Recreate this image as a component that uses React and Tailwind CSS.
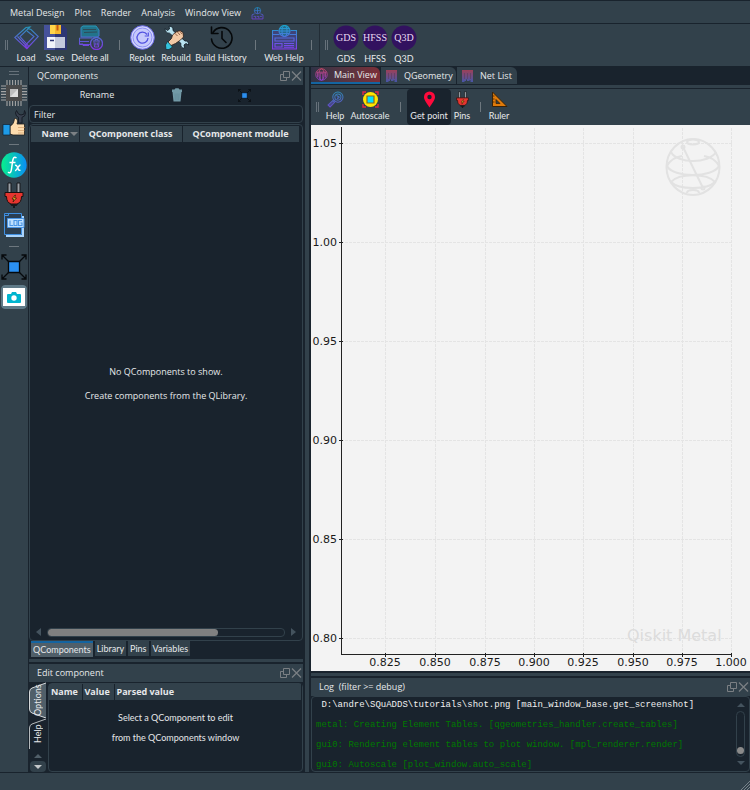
import React, { useId } from "react";

const FONT = "font-['Open_Sans','Noto_Sans',sans-serif]";
const NARROW = "font-['Lato','Open_Sans',sans-serif]";

/* ---------- icons ---------- */

function GradIcon({ size = 25, from = "#1fa0b8", to = "#8433e6", label, children, width = 1 }) {
  const id = useId();
  return (
    <svg width={size} height={size} viewBox="0 0 25 25" fill="none" stroke={`url(#${id})`} strokeWidth={width} aria-label={label}>
      <defs>
        <linearGradient id={id} gradientUnits="userSpaceOnUse" x1="0" y1="0" x2="0" y2="25">
          <stop offset="0" stopColor={from} />
          <stop offset="1" stopColor={to} />
        </linearGradient>
      </defs>
      {children}
    </svg>
  );
}

const LoadIcon = () => (
  <GradIcon width={1.1}>
    <path d="M12 2.500 16 2l-10 9.500L14.500 21 12.500 23.500.800 12.500 12 2.500M3.500 11.500 13 21.500" />
    <path d="M13.500 3.500 17 4.500 24.300 11.500 13 23.500 11 20.500 20 11.500 13 6" />
  </GradIcon>
);

const SaveIcon = () => (
  <svg width="25" height="25" viewBox="0 0 25 25">
    <path d="M1 0h19l4 4v21H1z" fill="#2d3674" />
    <path d="M1 0h11v25H1z" fill="#46529b" />
    <path d="M7 0h11v9H7z" fill="#f5b82e" />
    <path d="M7 0h5v9H7z" fill="#ffd54a" />
    <path d="M13.500 0h2v5.500h-2z" fill="#c65a14" />
    <path d="M4 12h18v11H4z" fill="#c3c9dc" />
    <path d="M4 12h8v11H4z" fill="#f1f3fa" />
    <path d="M7 15.500h4" stroke="#2d3674" strokeWidth="1.500" />
  </svg>
);

const DeleteAllIcon = () => (
  <GradIcon>
    <path d="M3 10V2.500L5 1h13l3 4v6l-2 1H3z" fill="#1d86a0" fillOpacity="0.750" />
    <path d="M5 4.500h13M6 7.500l13-.5" stroke="#32414b" strokeWidth="0.800" />
    <path d="M14 13H1.500M1.500 13v6.500H12M2 16.500h9M2 19h3v1.500h6" />
    <circle cx="18.500" cy="18.500" r="6" fill="#32414b" strokeWidth="1.300" />
    <path d="M15 16h7M17 16v-1.500h3V16M16 16.500l.5 5.500h4l.5-5.500M17.800 17.500v3M19.300 17.500v3" />
  </GradIcon>
);

const ReplotIcon = () => (
  <svg width="25" height="25" viewBox="0 0 25 25" fill="none">
    <circle cx="12.500" cy="12.500" r="11.800" fill="#d4d6fb" stroke="#6b6be8" strokeWidth="1" />
    <circle cx="12.500" cy="12.500" r="9.500" fill="#c6c9fb" stroke="#8b8df5" strokeWidth="1" />
    <path d="M17 9.500A5.500 5.500 0 1 0 18 13" stroke="#5252e0" strokeWidth="1.300" />
    <path d="M18.300 7.500v3.500h-3.600" stroke="#5252e0" strokeWidth="1.200" />
  </svg>
);

const RebuildIcon = () => (
  <svg width="25" height="25" viewBox="0 0 25 25" strokeLinejoin="round">
    <path d="M1 3.500 3.500 5.500 5.500 4 5 1.200C8 1 9.500 3 9 5.500l12 10.500c2.500-.5 4 1.500 3.500 4L22 18.500 20 20l.8 3.200c-3 .3-4.600-2-3.800-4.700L5.500 8.200C3 8.500 1 6.500 1 3.500z" fill="#b9e2f0" stroke="#16232c" strokeWidth="0.900" />
    <path d="M6 21 4 17l3.500-3.500L8.500 10l3.500-3 4-1.500 3 2 .5 4.500-3 3-5 3.500z" fill="#f3c9a5" stroke="#2a1d18" strokeWidth="0.800" />
    <path d="m10.500 8 3 3M13 6.500l3 3.500M15.500 6l2.500 3" stroke="#7b4a33" strokeWidth="0.800" />
    <path d="m3.500 16.500 5 5.500-3.500 2.500H2L1.500 20z" fill="#33c2dc" stroke="#16232c" strokeWidth="0.700" />
  </svg>
);

const HistoryIcon = () => (
  <svg width="25" height="25" viewBox="0 0 25 25" fill="none" stroke="#05080a" strokeWidth="1.600" strokeLinecap="round" strokeLinejoin="round">
    <path d="M4 7.500A10.300 10.300 0 1 1 2.500 14" />
    <path d="M2.500 2v6.500H9M13 6.500v7l4 4" />
  </svg>
);

const WebHelpIcon = ({ size = 25 }) => (
  <GradIcon size={size} from="#18a5c9" to="#8a36f0" width={1.1}>
    <path d="M6.500 5.500H.500v18.500h24V5.500h-6M.500 9.500h7M17.500 9.500h7" fill="#5a48d0" fillOpacity="0.350" />
    <circle cx="12.500" cy="6" r="5.500" fill="#246a8c" />
    <ellipse cx="12.500" cy="6" rx="2.500" ry="5.500" />
    <path d="M7 6h11M8 3.500h9M8 8.500h9M3 13h19v3H3zM3 18.500h7v3.500H3zM12 18.500h10M12 20.500h10M12 22.300h10" />
  </GradIcon>
);

const TinyWebIcon = () => (
  <GradIcon size={13} from="#1b8fc0" to="#7a36d8" width={1.600}>
    <circle cx="12.500" cy="7" r="6" />
    <path d="M6.500 7h12M12.500 1v12M7 13 2 15v8h21v-8l-5-2M5 18h4v4M11 18h4v4M17 18h4" />
  </GradIcon>
);

const BadgeIcon = ({ text }) => (
  <svg width="26" height="26" viewBox="0 0 26 26">
    <circle cx="13" cy="13" r="12.500" fill="#32125f" />
    <text x="13" y="16" textAnchor="middle" fontSize="10" fill="#e9dcf2" className="font-['Liberation_Serif',serif]">{text}</text>
  </svg>
);

const ChipIcon = () => (
  <svg width="26" height="26" viewBox="0 0 26 26">
    <path d="M6 0v26M8.800 0v26M11.600 0v26M14.400 0v26M17.200 0v26M20 0v26M0 6h26M0 8.800h26M0 11.600h26M0 14.400h26M0 17.200h26M0 20h26" stroke="#a5a5a5" strokeWidth="1.100" />
    <path d="M5 5h16v16H5z" fill="#4a4a4a" />
    <path d="M9 9h8v8H9z" fill="#bdbdbd" />
    <path d="m9 17 8-8v8z" fill="#dedede" />
  </svg>
);

const LikeIcon = () => (
  <svg width="26" height="26" viewBox="0 0 26 26" strokeLinejoin="round">
    <path d="M15.500.5 14.500 3l1 3 2 1.300V13h3.500V7.300L23.500 6l1-3L23.500.5 23 4l-3 1-2.500-1z" fill="#38404e" stroke="#171d26" />
    <path d="M9 16c3-1 4-4 4.500-7.500 3-.5 3.500 2.500 2.500 5.500h7.500v11H12l-3-1z" fill="#fddcae" stroke="#1c1c1c" strokeWidth="0.800" />
    <path d="M17 17.500h7M17 20.500h6.500M17 23h6" stroke="#c9935f" strokeWidth="0.600" />
    <path d="M2 14.500h7V25H2z" fill="#1e9be8" stroke="#102030" strokeWidth="0.700" />
  </svg>
);

const FxIcon = () => (
  <svg width="26" height="26" viewBox="0 0 26 26" fill="none">
    <defs>
      <linearGradient id="fx" x1="0" x2="1">
        <stop offset="0" stopColor="#08f08c" />
        <stop offset="1" stopColor="#0a8df5" />
      </linearGradient>
    </defs>
    <circle cx="13" cy="13" r="12.700" fill="url(#fx)" />
    <path d="M15.500 6C13 4 12 6 11.500 10l-1 7c-.5 4-2 4.500-3.500 3M8.500 10.500h6" stroke="#fff" strokeWidth="1.500" />
    <path d="M14 13.500c3-1.500 2.500 6.500 5.500 4.500M19.500 13c-2 0-4 6-5.500 5.500" stroke="#fff" strokeWidth="1.400" />
  </svg>
);

const PlugIcon = ({ size = 26 }) => (
  <svg width={size} height={size} viewBox="0 0 26 26" strokeLinejoin="round">
    <path d="M7 1h3v10H7zM16 1h3v10h-3z" fill="#9aa0a6" stroke="#16191c" strokeWidth="1" />
    <path d="M4 10.500h18v4h-1.500c0 4-1.500 6.500-4.500 7.500h-6c-3-1-4.500-3.500-4.500-7.500H4z" fill="#e5352f" stroke="#1b1010" strokeWidth="1" />
    <path d="M9 22h8l-1.500 2h-1.500v2h-2v-2h-1.500z" fill="#16191c" />
    <path d="m14 13-3 4h2l-1 3 3.500-4h-2l1-3z" fill="#ffc42e" stroke="#2a1405" strokeWidth="0.700" />
  </svg>
);

const LogIcon = () => (
  <svg width="26" height="26" viewBox="0 0 26 26">
    <path d="M5 24h17V4" fill="none" stroke="#a9d3fb" strokeWidth="2" />
    <path d="M3.500 1.500h17v21h-17z" fill="#2b3f52" stroke="#3f8fe0" />
    <path d="M3.500 3.500h4v-2" fill="none" stroke="#3f8fe0" />
    <path d="M6.500 6.500h16.500v9H6.500z" fill="#bfe0fd" stroke="#4a95e4" />
    <path d="M9 8.500v5h3M13 8.500h3v5h-3zM21 8.500h-3.500v5H21V11h-1.500" fill="none" stroke="#4a95e4" strokeWidth="1.100" />
  </svg>
);

const ExpandIcon = ({ size = 26 }) => (
  <svg width={size} height={size} viewBox="0 0 26 26" fill="none" stroke="#06090c" strokeWidth="1.300">
    <path d="m1 1 7 7M25 1l-7 7M1 25l7-7M25 25l-7-7M1 5.500V1h4.500M20.500 1H25v4.500M1 20.500V25h4.500M20.500 25H25v-4.500" />
    <path d="M7.500 7.500h11v11h-11z" fill="#2b8ff0" />
  </svg>
);

const CameraIcon = () => (
  <svg width="22" height="18" viewBox="0 0 22 18">
    <path d="M0 0h22v18H0z" fill="#fff" />
    <path d="M5 6h3l1-2h4l1 2h3q1 0 1 1v7q0 1-1 1H5q-1 0-1-1V7q0-1 1-1z" fill="#00b5cf" />
    <circle cx="11" cy="10" r="2.700" fill="#fff" />
  </svg>
);

const TrashIcon = () => (
  <svg width="12" height="14" viewBox="0 0 12 14">
    <path d="M1 1.500h2.500l1-1.200h3l1 1.200H11V4H1zM1.500 4h9l-1 9.500h-7z" fill="#7299a6" />
    <path d="M4 5.500 4.300 12M6 5.500V12M8 5.500 7.700 12" stroke="#5f8796" strokeWidth="0.700" />
  </svg>
);

const MagnifierIcon = () => (
  <GradIcon size={17} from="#2c8fb8" to="#6a45c8" width={1.500}>
    <circle cx="16" cy="9" r="7.500" />
    <circle cx="16" cy="9" r="4.500" />
    <path d="M14 6.500 18 9l-3 3M10 13l2.500 2.500M8.500 14 1.500 20.500l3 3L11 17z" fill="#5a4fc4" fillOpacity="0.500" />
  </GradIcon>
);

const AutoscaleIcon = () => (
  <svg width="17" height="17" viewBox="0 0 17 17">
    <path d="M1 4V1h3M13 1h3v3M16 13v3h-3M4 16H1v-3" fill="none" stroke="#e02848" strokeWidth="1.400" />
    <circle cx="8.500" cy="8.500" r="7.500" fill="#ffe600" />
    <path d="M5 5h7v7H5z" fill="#00e0ff" stroke="#8a6a1c" strokeWidth="1.200" />
  </svg>
);

const PinIcon = () => (
  <svg width="17" height="17" viewBox="0 0 17 17">
    <path d="M8.500 16.500C5 11 3 8.800 3 6a5.500 5.500 0 0 1 11 0c0 2.800-2 5-5.500 10.500z" fill="#ff0a3c" />
    <circle cx="8.500" cy="6" r="2.200" fill="#19232d" />
  </svg>
);

const RulerIcon = () => (
  <svg width="17" height="17" viewBox="0 0 17 17">
    <path d="M1.500 1v14.500H16z" fill="#e07a0a" stroke="#3a2308" />
    <path d="M5 8.500v4h4z" fill="#32414b" stroke="#3a2308" strokeWidth="0.800" />
    <path d="M2 5h1.500M2 8h1.500M2 11h1.500" stroke="#3a2308" strokeWidth="0.800" />
  </svg>
);

const SphereIcon = () => (
  <GradIcon size={13} from="#d84a63" to="#8d3fe0" width={1.600}>
    <circle cx="12.500" cy="12.500" r="11" />
    <ellipse cx="12.500" cy="12.500" rx="5" ry="11" />
    <path d="M3 8h19M5 18V8M10 23V10h5v13M20 18V8" />
  </GradIcon>
);

const GeometryIcon = () => {
  const id = useId();
  return (
    <svg width="13" height="14" viewBox="0 0 13 14">
      <defs>
        <linearGradient id={id} x1="0" y1="0" x2="0" y2="1">
          <stop offset="0" stopColor="#9c4058" />
          <stop offset="1" stopColor="#4656a8" />
        </linearGradient>
      </defs>
      <path d="M1 1h11v12H9.500V11h-1v1H6v-1.500H5V12H3.500v1H1z" fill={`url(#${id})`} />
      <path d="M3.500 4v6M6.500 4v6M9.500 4v6" stroke="#5f3f62" strokeWidth="0.800" />
    </svg>
  );
};

const FloatClose = () => (
  <div className="flex items-center gap-px text-[#7a7f83]">
    <button aria-label="Float panel">
      <svg width="10" height="10" viewBox="0 0 10 10" fill="none" stroke="currentColor">
        <path d="M3.500.5h6v6h-6zM3.500 3.500h-3v6h6v-3" />
      </svg>
    </button>
    <button aria-label="Close panel">
      <svg width="11" height="10" viewBox="0 0 11 10" stroke="currentColor" strokeWidth="1.300">
        <path d="m1 .5 9 9M10 .5l-9 9" />
      </svg>
    </button>
  </div>
);

const Arrow = ({ dir, color = "#44535e" }) => {
  const d = { left: "M6 0v8L1 4z", right: "M2 0v8l5-4z", up: "M0 6h8L4 2z", down: "M0 2h8L4 6z" }[dir];
  return (
    <svg width="8" height="8" viewBox="0 0 8 8" className="shrink-0">
      <path d={d} fill={color} />
    </svg>
  );
};

/* ---------- small layout pieces ---------- */

const Grip = () => (
  <div className="flex w-3 shrink-0 items-center justify-center gap-px">
    <span className="h-2.5 w-px bg-[#66717a]" />
    <span className="h-2.5 w-px bg-[#66717a]" />
  </div>
);

const Sep = ({ width }) => (
  <div className={`flex shrink-0 items-center justify-center ${width}`}>
    <span className="h-2.5 w-px bg-[#6d777e]" />
  </div>
);

const Tool = ({ width, icon, label, active }) => (
  <button className={`flex shrink-0 flex-col items-center justify-center whitespace-nowrap ${NARROW} ${width} ${active ? "rounded bg-[#19232d]" : ""}`}>
    {icon}
    <span className="leading-[15px]">{label}</span>
  </button>
);

const DockTitle = ({ children }) => (
  <div className="flex h-[18px] shrink-0 items-center justify-between bg-[#32414b] pr-px pl-2">
    <h2>{children}</h2>
    <FloatClose />
  </div>
);

const RailItem = ({ label, children }) => (
  <button aria-label={label} className="flex h-[30px] w-full items-center justify-center">{children}</button>
);

const RailSep = () => (
  <div className="flex h-3 items-center justify-center">
    <span className="h-px w-2.5 bg-[#6d777e]" />
  </div>
);

/* ---------- plot ---------- */

const X_TICKS = [[74, "0.825"], [124, "0.850"], [174, "0.875"], [223, "0.900"], [272, "0.925"], [322, "0.950"], [371, "0.975"], [420, "1.000"]];
const Y_TICKS = [[18, "1.05"], [117, "1.00"], [216, "0.95"], [315, "0.90"], [414, "0.85"], [513, "0.80"]];

const Plot = () => (
  <svg viewBox="0 0 439 546" preserveAspectRatio="none" className="block min-h-0 w-full flex-1 bg-[#f3f3f3] font-['DejaVu_Sans',sans-serif]" role="img" aria-label="Design plot">
    <g stroke="#e4e4e4" strokeDasharray="3 1">
      {X_TICKS.map(([x]) => <path key={x} d={`M${x + 0.5} 3V529`} />)}
      {Y_TICKS.map(([y]) => <path key={y} d={`M30 ${y + 0.5}H421`} />)}
    </g>
    <g fill="none" stroke="#e2e2e2" strokeWidth="2">
      <ellipse cx="382" cy="42" rx="26.500" ry="28" />
      <ellipse cx="382" cy="17" rx="6" ry="2.500" />
      <path d="M360 27C366 39 398 39 405 27M356 41C362 53 402 53 408 41M360 57C368 65 396 65 404 57C396 48 368 48 360 57M356 41C359 35 364 32 371 31M408 41C405 35 400 32 393 31M376 68c0-4 12-4 12 0M372 22l20 41" />
      <circle cx="372" cy="22" r="1.500" />
      <circle cx="392" cy="63" r="1.500" />
    </g>
    <text x="316" y="516" fontSize="16" fill="#dcdcdc">Qiskit Metal</text>
    <g stroke="#222" fill="none">
      <path d="M30.500 2V530M30 529.500H421" />
      {X_TICKS.map(([x]) => <path key={x} d={`M${x + 0.5} 528v4`} />)}
      {Y_TICKS.map(([y]) => <path key={y} d={`M28 ${y + 0.5}h4`} />)}
    </g>
    <g fontSize="11" fill="#1a1a1a">
      {X_TICKS.map(([x, t]) => <text key={t} x={x} y="541" textAnchor="middle">{t}</text>)}
      {Y_TICKS.map(([y, t]) => <text key={t} x="26" y={y + 4} textAnchor="end">{t}</text>)}
    </g>
  </svg>
);

/* ---------- docks ---------- */

const TH = "h-4 overflow-hidden border-r border-[#19232d] bg-[#32414b] p-0 font-bold whitespace-nowrap";

const ComponentsDock = () => (
  <section className="flex min-h-0 flex-1 flex-col">
    <DockTitle>QComponents</DockTitle>
    <div className="grid h-5 shrink-0 grid-cols-[136fr_24fr_110fr] place-items-center pr-1">
      <button>Rename</button>
      <button aria-label="Delete"><TrashIcon /></button>
      <button aria-label="Expand"><ExpandIcon size={13} /></button>
    </div>
    <input aria-label="Filter" placeholder="Filter" className="h-[18px] w-full shrink-0 rounded border border-[#32414b] bg-[#19232d] px-1 placeholder:text-[#e6e8ea] placeholder:opacity-100" />
    <div className="mt-px flex min-h-0 flex-1 flex-col rounded border border-[#32414b] p-px">
      <table className="w-full table-fixed border-collapse">
        <thead>
          <tr>
            <th className={`w-12 ${TH}`}>
              <div className="flex items-center justify-end gap-px pr-px">
                <span>Name</span>
                <Arrow dir="down" color="#7c8185" />
              </div>
            </th>
            <th className={`w-[103px] ${TH}`}>QComponent class</th>
            <th className={`w-[117px] ${TH}`}>QComponent module</th>
            <th className={TH} aria-label="More" />
          </tr>
        </thead>
      </table>
      <div className="flex flex-1 flex-col items-center justify-center gap-2 text-center leading-4">
        <p>No QComponents to show.</p>
        <p>Create components from the QLibrary.</p>
      </div>
      <div className="flex h-3.5 shrink-0 items-center gap-1 px-1">
        <Arrow dir="left" />
        <div className="h-[9px] flex-1 rounded border border-[#32414b]">
          <div className="h-[7px] w-[72%] rounded bg-[#808080]" />
        </div>
        <Arrow dir="right" />
      </div>
    </div>
    <nav className={`flex h-4 shrink-0 gap-0.5 pl-0.5 leading-[14px] ${NARROW}`}>
      <button className="border-t-2 border-[#1464a0] bg-[#505f69] px-0.5">QComponents</button>
      <button className="mb-px bg-[#32414b] px-0.5">Library</button>
      <button className="mb-px bg-[#32414b] px-0.5">Pins</button>
      <button className="mb-px bg-[#32414b] px-0.5">Variables</button>
    </nav>
  </section>
);

const EditDock = () => (
  <section className="flex h-[108px] shrink-0 flex-col">
    <DockTitle>Edit component</DockTitle>
    <div className="flex min-h-0 flex-1 gap-0.5">
      <nav className={`flex w-[17px] shrink-0 flex-col items-center ${NARROW}`}>
        <button className="relative h-9 w-full">
          <svg viewBox="0 0 17 36" className="absolute inset-0 h-full w-full">
            <path d="M17 1 3 6Q.5 7 .5 10v17q0 3 2.500 4l14 5" fill="#505f69" stroke="#d5d8da" />
          </svg>
          <span className="relative block h-full rotate-180 text-center leading-[17px] [writing-mode:vertical-rl]">Options</span>
        </button>
        <button className="relative h-8 w-full">
          <svg viewBox="0 0 17 32" className="absolute inset-0 h-full w-full">
            <path d="M17 1 3 6Q.5 7 .5 10v21" fill="none" stroke="#b5babd" />
          </svg>
          <span className="relative block h-full rotate-180 text-center leading-[17px] [writing-mode:vertical-rl]">Help</span>
        </button>
        <button aria-label="Scroll tabs up" className="flex h-[11px] w-full items-center justify-center"><Arrow dir="up" color="#505f69" /></button>
        <button aria-label="Scroll tabs down" className="flex h-[11px] w-4 items-center justify-center rounded-sm bg-[#32414b]"><Arrow dir="down" color="#c4c8ca" /></button>
      </nav>
      <div className="mt-px flex flex-1 flex-col rounded border border-[#32414b]">
        <table className="w-full table-fixed border-collapse text-left">
          <thead>
            <tr>
              <th className={`w-[33px] pl-0.5! ${TH}`}>Name</th>
              <th className={`w-8 pl-0.5! ${TH}`}>Value</th>
              <th className={`pl-0.5! ${TH}`}>Parsed value</th>
            </tr>
          </thead>
        </table>
        <div className={`flex flex-col items-center gap-1 pt-2.5 leading-4 ${NARROW}`}>
          <p>Select a QComponent to edit</p>
          <p>from the QComponents window</p>
        </div>
      </div>
    </div>
  </section>
);

const LogDock = () => (
  <section className="flex h-[94px] shrink-0 flex-col">
    <DockTitle>Log&nbsp; (filter &gt;= debug)</DockTitle>
    <div className="flex min-h-0 flex-1 overflow-hidden rounded border border-[#32414b] pr-1">
      <div className="min-w-0 flex-1 overflow-hidden pl-1 font-['Liberation_Mono',monospace] text-[9px] leading-5 whitespace-pre text-[#007a00]">
        <p className="-mt-0.5 text-[#f0f0f0]"> D:\andre\SQuADDS\tutorials\shot.png [main_window_base.get_screenshot]</p>
        <p>metal: Creating Element Tables. [qgeometries_handler.create_tables]</p>
        <p>gui0: Rendering element tables to plot window. [mpl_renderer.render]</p>
        <p>gui0: Autoscale [plot_window.auto_scale]</p>
      </div>
      <div className="flex w-[9px] shrink-0 flex-col items-center gap-0.5 py-1">
        <Arrow dir="up" />
        <div className="flex w-[9px] flex-1 flex-col justify-end rounded-full border border-[#32414b] pb-0.5">
          <div className="h-[7px] w-[7px] rounded-full bg-[#8a8a8a]" />
        </div>
        <Arrow dir="down" />
      </div>
    </div>
  </section>
);

const ViewTab = ({ active, icon, label, width }) => (
  <button className={`flex h-[17px] items-center gap-1.5 rounded-tr-md pl-1 whitespace-nowrap ${width} ${active ? "border-b-2 border-[#1464a0] bg-linear-to-r from-[#2f3347] to-[#7c2e38]" : "bg-[#32414b]"}`}>
    {icon}
    <span>{label}</span>
  </button>
);

export default function App() {
  return (
    <div className={`flex h-screen min-h-[480px] flex-col overflow-hidden border-t border-[#19232d] bg-[#19232d] text-[9px] leading-[14px] text-[#e6e8ea] ${FONT}`}>
      <nav className="flex h-[22px] shrink-0 items-center gap-2.5 bg-[#32414b] pt-0.5 pl-2.5">
        <button>Metal Design</button>
        <button>Plot</button>
        <button>Render</button>
        <button>Analysis</button>
        <button>Window View</button>
        <button aria-label="Web"><TinyWebIcon /></button>
      </nav>

      <header className="mt-px flex h-[42px] shrink-0 bg-[#32414b]">
        <div className="flex border-r border-[#222d36]">
          <Grip />
          <Tool width="w-7" icon={<LoadIcon />} label="Load" />
          <Tool width="w-[30px]" icon={<SaveIcon />} label="Save" />
          <Tool width="w-10" icon={<DeleteAllIcon />} label="Delete all" />
          <Sep width="w-[18px]" />
          <Tool width="w-7" icon={<ReplotIcon />} label="Replot" />
          <Tool width="w-10" icon={<RebuildIcon />} label="Rebuild" />
          <Tool width="w-[50px]" icon={<HistoryIcon />} label="Build History" />
          <Sep width="w-[18px]" />
          <Tool width="w-10" icon={<WebHelpIcon />} label="Web Help" />
          <Sep width="w-[15px]" />
        </div>
        <Grip />
        <Tool width="w-7" icon={<BadgeIcon text="GDS" />} label="GDS" />
        <Tool width="w-[30px]" icon={<BadgeIcon text="HFSS" />} label="HFSS" />
        <Tool width="w-7" icon={<BadgeIcon text="Q3D" />} label="Q3D" />
      </header>

      <main className="mt-px flex min-h-0 flex-1">
        <aside className="flex w-7 shrink-0 flex-col bg-[#32414b]">
          <div className="flex h-[11px] flex-col items-center justify-center gap-0.5">
            <span className="h-px w-2.5 bg-[#66717a]" />
            <span className="h-px w-2.5 bg-[#66717a]" />
          </div>
          <RailItem label="Component chip"><ChipIcon /></RailItem>
          <RailItem label="Build tools"><LikeIcon /></RailItem>
          <RailSep />
          <RailItem label="Variables"><FxIcon /></RailItem>
          <RailItem label="Connections"><PlugIcon /></RailItem>
          <RailItem label="Log"><LogIcon /></RailItem>
          <RailSep />
          <RailItem label="Full view"><ExpandIcon /></RailItem>
          <RailItem label="Screenshot">
            <span className="flex h-6 w-[26px] items-center justify-center rounded-sm border border-[#5f7a88] bg-[#5f7a88]"><CameraIcon /></span>
          </RailItem>
        </aside>

        <div className="ml-px flex w-[274px] shrink-0 flex-col">
          <ComponentsDock />
          <div className="my-0.5 h-[3px] shrink-0 bg-[#32414b]" />
          <EditDock />
        </div>

        <div className="mx-0.5 w-1 shrink-0 bg-[#32414b]" />

        <div className="flex min-w-0 flex-1 flex-col">
          <nav className="flex shrink-0 gap-px">
            <ViewTab active width="w-[69px]" icon={<SphereIcon />} label="Main View" />
            <ViewTab width="w-[75px]" icon={<GeometryIcon />} label="QGeometry" />
            <ViewTab width="w-[60px]" icon={<GeometryIcon />} label="Net List" />
          </nav>
          <div className="mt-px h-[3px] shrink-0 bg-[#32414b]" />
          <div className="mt-px flex h-9 shrink-0 bg-[#32414b]">
            <Grip />
            <Tool width="w-6" icon={<MagnifierIcon />} label="Help" />
            <Tool width="w-[46px]" icon={<AutoscaleIcon />} label="Autoscale" />
            <Sep width="w-3.5" />
            <Tool active width="w-11" icon={<PinIcon />} label="Get point" />
            <Tool width="w-[22px]" icon={<PlugIcon size={17} />} label="Pins" />
            <Sep width="w-3.5" />
            <Tool width="w-6" icon={<RulerIcon />} label="Ruler" />
          </div>
          <Plot />
          <div className="my-0.5 h-[3px] shrink-0 bg-[#32414b]" />
          <LogDock />
        </div>
      </main>

      <footer className="mt-px flex h-[17px] shrink-0 items-end justify-end bg-[#32414b]">
        <svg width="9" height="9" viewBox="0 0 9 9" stroke="#77828a">
          <path d="m0 9 9-9M3 9l6-6M6 9l3-3" />
        </svg>
      </footer>
    </div>
  );
}
